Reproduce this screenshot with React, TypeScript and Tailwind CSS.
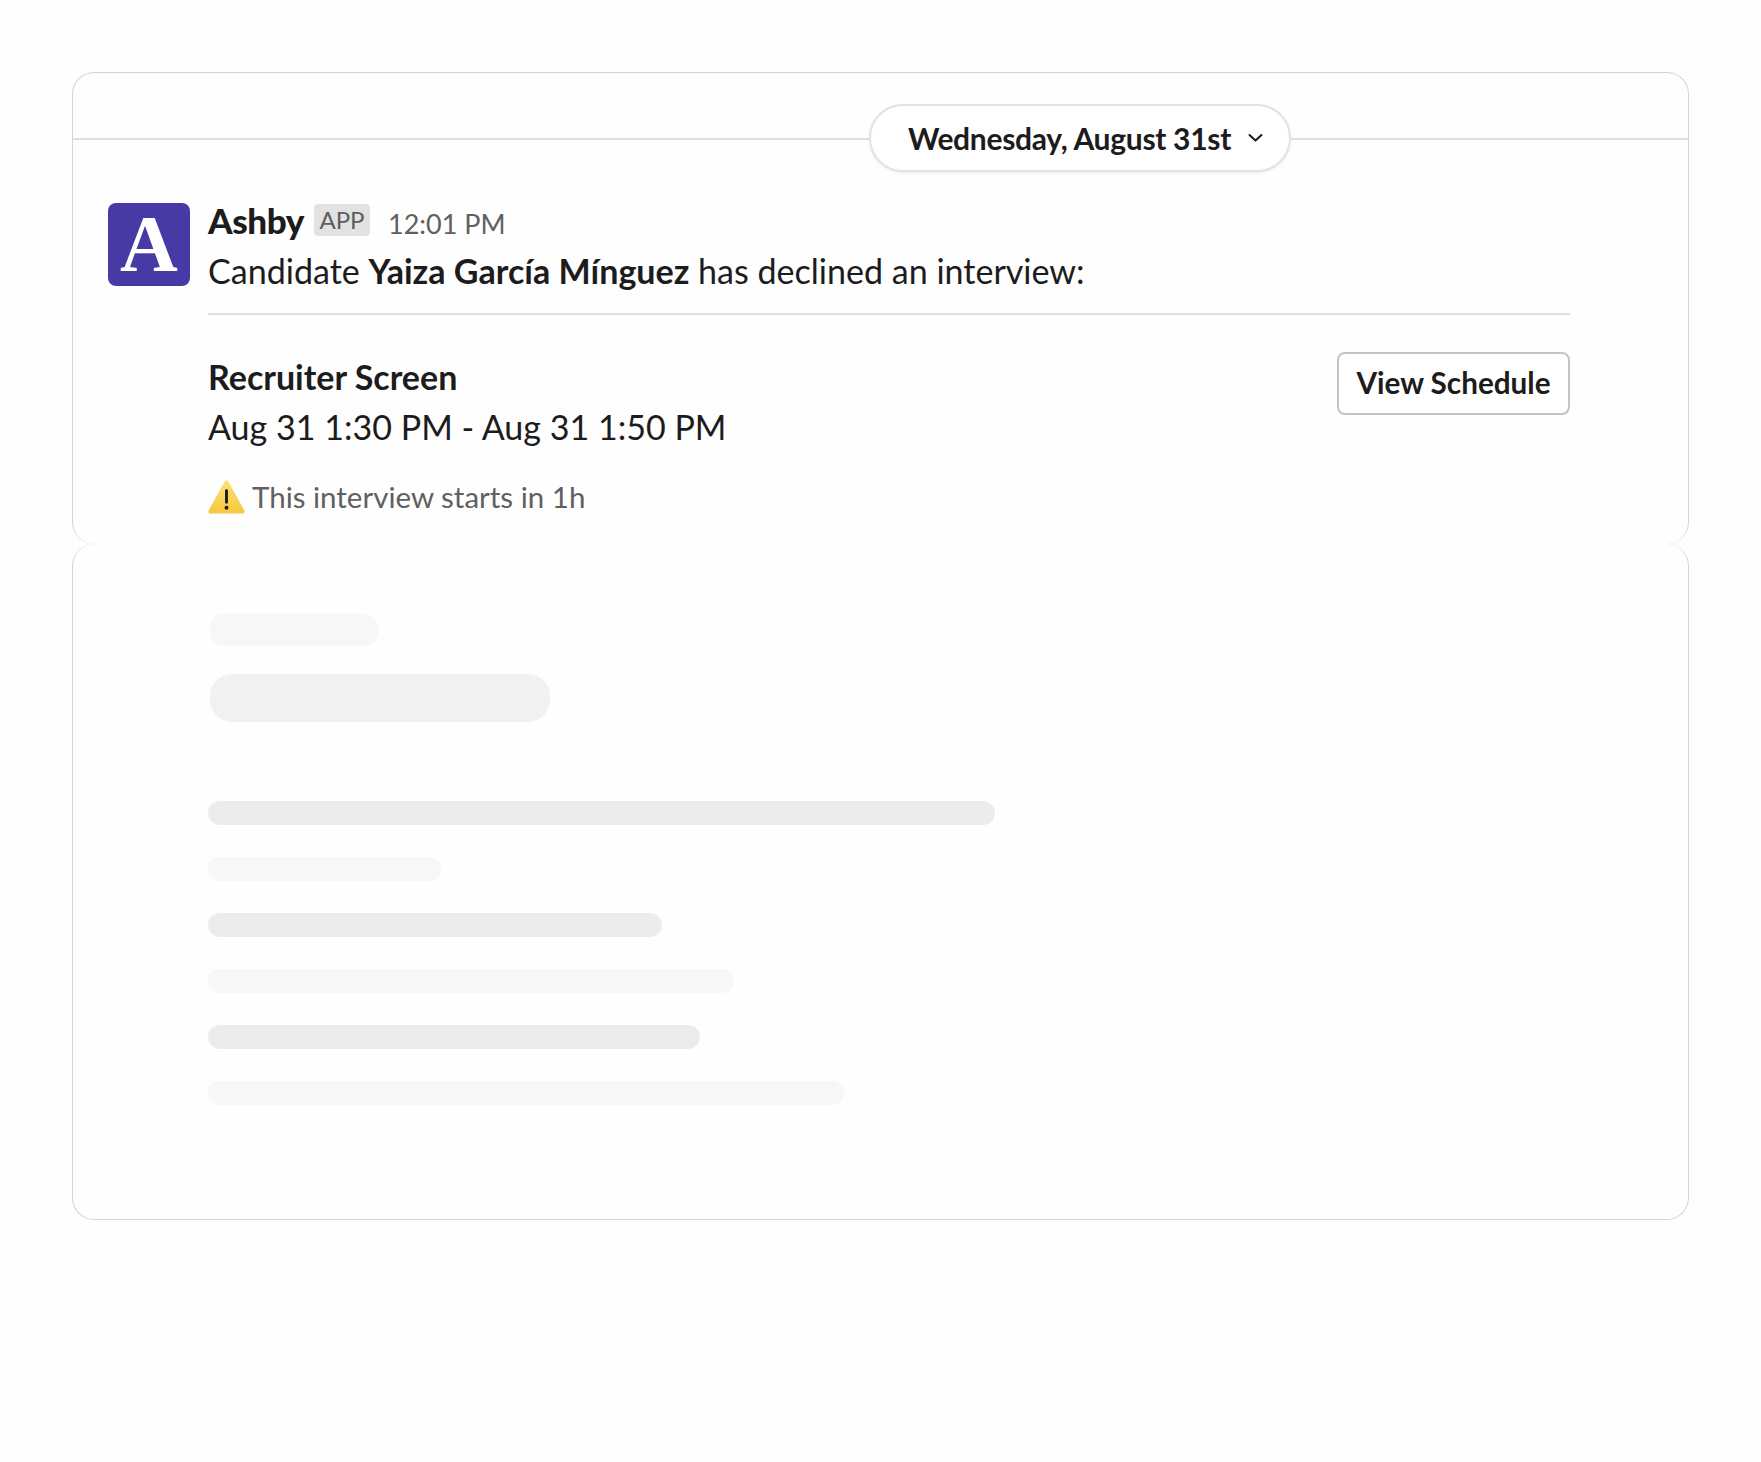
import React from 'react';

const font = { fontFamily: '"Lato", "Noto Sans", sans-serif' };

const bars = [
  { width: 'w-[787px]', color: 'bg-[#ececec]' },
  { width: 'w-[233px]', color: 'bg-[#f7f7f7]' },
  { width: 'w-[454px]', color: 'bg-[#ececec]' },
  { width: 'w-[526px]', color: 'bg-[#f7f7f7]' },
  { width: 'w-[492px]', color: 'bg-[#ececec]' },
  { width: 'w-[636px]', color: 'bg-[#f7f7f7]' },
];

const Chevron = () => (
  <svg width="15" height="10" viewBox="0 0 15 10" fill="none" className="ml-[17px]">
    <path d="M1.5 2l6 5.6 6-5.6" stroke="#1d1c1d" strokeWidth="2" strokeLinecap="round" strokeLinejoin="round" />
  </svg>
);

const WarningIcon = () => (
  <svg width="37" height="34" viewBox="0 0 36 33" className="shrink-0">
    <defs>
      <linearGradient id="warn" x1="0" y1="0" x2="0" y2="1">
        <stop offset="0" stopColor="#fbe07a" />
        <stop offset="1" stopColor="#f8c83c" />
      </linearGradient>
    </defs>
    <path d="M16.2 1.4c.8-1.4 2.8-1.4 3.6 0l15.6 28.2c.7 1.4-.2 3-1.8 3H2.4c-1.6 0-2.5-1.6-1.8-3z" fill="url(#warn)" />
    <rect x="16.6" y="9" width="2.8" height="14" rx="1.4" fill="#1a1a1a" />
    <circle cx="18" cy="27" r="1.9" fill="#1a1a1a" />
  </svg>
);

export default function App() {
  return (
    <div className="min-h-[1462px] bg-[#fefefe] pt-[72px] pl-[72px]" style={font}>
      <div className="w-[1617px]">
        {/* message card */}
        <div className="h-[472px] rounded-[22px] border border-b-0 border-[#d4d4d4]">
          <div className="flex items-center pt-[31px]">
            <div className="mt-[2px] h-[2px] w-[796px] bg-[#dfdfdf]" />
            <div className="flex h-[68px] w-[422px] items-center rounded-full border-2 border-[#e2e2e2] bg-white pl-[37px] shadow-[0_1px_3px_rgba(0,0,0,0.08)]">
              <span className="text-[30px] font-bold leading-none tracking-[-0.3px] text-[#1d1c1d]">Wednesday, August 31st</span>
              <Chevron />
            </div>
            <div className="mt-[2px] h-[2px] flex-1 bg-[#dfdfdf]" />
          </div>

          <div className="mt-[31px] flex pl-[35px]">
            <div className="flex h-[83px] w-[82px] shrink-0 items-center justify-center rounded-[8px] bg-[#483aa6]">
              <span className="mb-[2px] text-[80px] font-bold leading-none text-white" style={{ fontFamily: '"Liberation Serif", serif' }}>A</span>
            </div>
            <div className="ml-[18px] w-[1362px]">
              <div className="flex items-center">
                <span className="mt-[-3px] text-[35px] font-black leading-[40px] tracking-[-0.4px] text-[#1d1c1d]">Ashby</span>
                <span className="ml-[10px] mt-[-3px] flex h-[32px] w-[56px] items-center justify-center rounded-[4px] bg-[#e2e2e2] text-[24px] leading-none text-[#5e5d60]">APP</span>
                <span className="ml-[18px] mt-[3px] text-[27px] leading-none text-[#616061]">12:01 PM</span>
              </div>
              <p className="mt-[9px] text-[34.05px] leading-[44px] text-[#1d1c1d]">
                Candidate <b className="font-bold">Yaiza García Mínguez</b> has declined an interview:
              </p>
              <div className="mt-[20px] h-[2px] bg-[#dfdfdf]" />
              <div className="mt-[37px] flex items-start justify-between">
                <div>
                  <h3 className="mt-[1px] text-[34px] font-bold leading-[48px] text-[#1d1c1d]">Recruiter Screen</h3>
                  <p className="mt-[2px] text-[34.05px] leading-[48px] text-[#1d1c1d]">Aug 31 1:30 PM - Aug 31 1:50 PM</p>
                  <div className="mt-[29px] flex items-center">
                    <WarningIcon />
                    <span className="ml-[7px] text-[29.5px] leading-none text-[#616061]">This interview starts in 1h</span>
                  </div>
                </div>
                <button className="flex h-[63px] w-[233px] items-center justify-center rounded-[8px] border-2 border-[#c4c4c4] bg-white text-[29.7px] font-bold text-[#1d1c1d]">
                  View Schedule
                </button>
              </div>
            </div>
          </div>
        </div>

        {/* loading placeholder */}
        <div className="h-[676px] rounded-[22px] border border-t-0 border-[#d4d4d4] pl-[135px] pt-[70px]">
          <div className="ml-[2px] h-[32px] w-[168px] rounded-[14px] bg-[#f7f7f7]" />
          <div className="ml-[2px] mt-[28px] h-[48px] w-[340px] rounded-[22px] bg-[#f1f1f2]" />
          <div className="mt-[79px] flex flex-col gap-[32px]">
            {bars.map((bar) => (
              <div key={bar.width} className={`h-[24px] rounded-[12px] ${bar.width} ${bar.color}`} />
            ))}
          </div>
        </div>
      </div>
    </div>
  );
}
